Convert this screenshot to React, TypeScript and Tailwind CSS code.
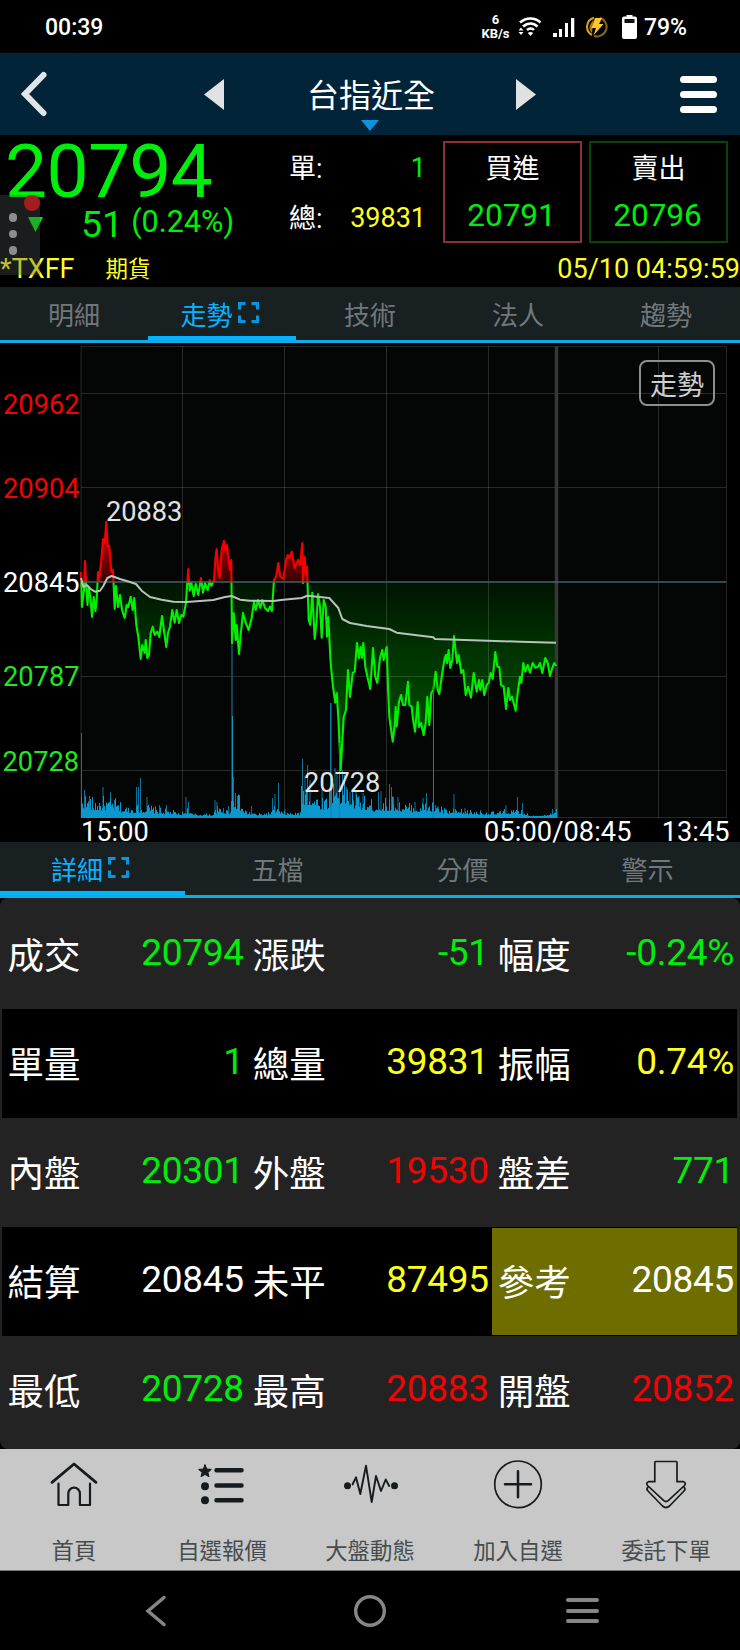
import {memo} from "react";
import type {ReactNode} from "react";
import clsx from "clsx";

const GREEN = "text-[#00ee0c]";
const RED = "text-[#ee0505]";
const YELLOW = "text-[#ffff1e]";

const chartTabs = ["明細", "走勢", "技術", "法人", "趨勢"];
const detailTabs = ["詳細", "五檔", "分價", "警示"];

const detailRows = [
  [
    {label: "成交", value: "20794", color: GREEN},
    {label: "漲跌", value: "-51", color: GREEN},
    {label: "幅度", value: "-0.24%", color: GREEN},
  ],
  [
    {label: "單量", value: "1", color: GREEN},
    {label: "總量", value: "39831", color: YELLOW},
    {label: "振幅", value: "0.74%", color: YELLOW},
  ],
  [
    {label: "內盤", value: "20301", color: GREEN},
    {label: "外盤", value: "19530", color: RED},
    {label: "盤差", value: "771", color: GREEN},
  ],
  [
    {label: "結算", value: "20845", color: "text-white"},
    {label: "未平", value: "87495", color: YELLOW},
    {label: "參考", value: "20845", color: "text-white", active: true},
  ],
  [
    {label: "最低", value: "20728", color: GREEN},
    {label: "最高", value: "20883", color: RED},
    {label: "開盤", value: "20852", color: RED},
  ],
];

const BASE_Y = 582;
const VOLUME_Y = 818;

const pricePoints =
  "81,572 82,607 84,590 85,561 86,583 87.5,605 88.7,588 90.5,598 92,617 93.7,597 95.5,611 96.7,600 98,572 99,580 101.3,560 103,539 104.7,543 106.3,521.7 107.7,546.7 109.3,546 111.3,571.7 113,570 114.7,609 116,586 118,607 120,595 122,610 124.7,618 126.7,605 128.3,607 130.7,596.7 132.7,610 134.3,598 136.3,625 138.3,636.7 140.7,659 142.3,645 144.7,653 145.7,640 147.3,658 149,655 150.7,633 152.7,626.7 154.7,635 157.3,631.7 159.3,637 162,616 164.3,633 166.3,647 168,633 170,626.7 172.3,610 174.7,622.7 176.7,610 179,623 181.3,615 183.3,616.7 186,603 187.3,581.7 188.3,569 189.7,590.7 191.3,582.7 193.7,596 195.7,584 198.3,595 201,578 203,592.7 205,583 207.7,590 209.7,580 211.3,586 214,580 215.3,560 216.7,549 218.3,571.7 219.7,578 221.7,550 224,540.7 225.3,550 227,545 228.7,560 230,570 231.3,560 232,643 233.7,613 235.7,640 236.7,625 239,654 240.7,635 243,613 245.7,623 248.7,630 251.7,618 254,601.7 255.7,610 258,600 260.3,608 262.3,600 265,608 268,611 270,606.7 272,611 274,580 276.3,576 278.3,563 280.3,576.7 283.3,579 286,560 287.7,555 289.3,558 291.7,551.7 294.7,568 298,560 300,565 302.3,543 303,583 304.7,556.7 306,575 307,566.7 308.7,620 310.3,625 312.3,592.7 314.7,639 316.7,620 318,594 320,606.7 321.7,637.7 323.7,600 325.7,606.7 327,636.7 328.3,617 330.3,656.7 331,666.7 333,686.7 335.3,702.7 336.7,693 338.3,716.7 340.7,770 343.7,717 346,710 348,670 350,697 352.7,673 354.7,671.7 357,643 359,658 360.7,647 362,658 363.3,643 365.3,666.7 367.7,678 370.3,689 373,648 375.3,676.7 377.3,683 380,658 382.3,650 383.7,660 386.7,647 388,687 389.3,716.7 392.7,741.7 394.7,725 395.7,707 396.7,726.7 399,701.7 401,695 403,705 405.3,705 408,681.7 409.3,705 411.7,706.7 412.7,717 415,731.7 417.7,702 419,727 421,723 423.7,735 425.7,723 427.3,697 429.3,725 431.3,693 433.3,690 435.7,671.7 437.7,690 439.3,694 442,675 444.7,658 446,655 447,663 448.7,650 450.3,668 452.3,660 454,636 455.7,651.7 457,663 458.7,655 461.3,673 463.3,670 465.7,695 468,686.7 471,697.7 473.7,673 476.7,691.7 479,680 480.3,690 482.3,680 484.3,695 486.7,685 488.7,683 490.7,673 492.7,679 495.3,652 497.3,666.7 499.3,667 501,685 503.7,686.7 506,709 508.3,688 510,700 512,696.7 515.7,710.7 517.7,693 520,676.7 521.3,683 523.3,663 525.3,671.7 527.7,665 530,672.7 532.7,663 535.3,667.7 538.3,666.7 540,663 542.3,673 545.3,658 547.7,663 550,676 552.3,668 554.3,663 556.3,666";

const averagePoints =
  "81,578 83.3,587 86.7,585 90.7,589 95,591.7 100,590.7 103.3,586 107.3,578 111.7,576 120,579 130,582 136,584 141.7,590.7 150,597 161.7,599.7 173.3,601.7 186.7,602 213.3,600 225,597 231.7,596 240,599.7 250,600.7 273.3,601 283.3,599.7 301.7,598 307.3,595.7 329.3,598 338.3,608 342.3,619 350,623 366.7,626 389.3,629 396.7,632.7 433.3,637.3 435,639 520,641.7 556,642.7";

// [x, top] of the bars that stand out
const volumeSpikes = [
  [81.5, 733], [84.5, 790], [89.5, 796], [103, 787], [110.5, 792], [114.5, 800], [136.5, 787], [138.5, 787],
  [140.5, 778], [147, 797], [159.5, 805], [166.5, 805], [186, 797], [188.5, 802], [215, 800], [217, 802],
  [223.5, 808], [228.5, 806], [233.5, 777], [235.5, 793], [237.5, 796], [239.5, 797], [251.5, 806], [272.5, 798],
  [275, 794], [278.5, 783], [285, 809], [302.5, 759], [305, 776], [307.5, 765], [310, 780], [322, 790],
  [330.5, 703], [335, 768], [337, 773], [339.5, 743], [342.5, 770], [346.5, 787], [350, 792], [356, 790],
  [359, 796], [363, 793], [378.5, 792], [381, 791], [389.5, 784], [391.5, 787], [393.5, 797], [398, 797],
  [415, 802], [423, 798], [426.5, 793], [433.5, 680], [435.5, 805], [438, 806], [454, 794], [465, 808],
  [506, 805], [517.5, 797], [522.5, 803], [552.5, 809],
];

// [x, typical height], interpolated in between
const volumeEnvelope = [
  [81, 28], [90, 19], [103, 20], [115, 18], [125, 11], [148, 13], [158, 9], [172, 7], [180, 3], [188, 10], [192, 3],
  [213, 3], [217, 10], [230, 7], [232, 32], [240, 20], [245, 7], [258, 3], [270, 5], [276, 12], [282, 5], [300, 4],
  [302, 38], [310, 36], [318, 22], [328, 24], [332, 44], [344, 40], [356, 24], [375, 16], [392, 20], [405, 14],
  [418, 14], [436, 15], [446, 8], [470, 7], [495, 5], [508, 8], [524, 6], [530, 1], [546, 2], [557, 10],
];

function envelopeAt(x: number) {
  for (let i = 1; i < volumeEnvelope.length; i++) {
    const [x1, h1] = volumeEnvelope[i];
    const [x0, h0] = volumeEnvelope[i - 1];
    if (x <= x1) return h0 + ((h1 - h0) * (x - x0)) / (x1 - x0);
  }
  return 0;
}

const volumePath = (() => {
  let seed = 17;
  let d = "";
  for (let x = 81.5; x < 557; x += 1) {
    seed = (seed * 1103515245 + 12345) % 2147483648;
    const noise = seed / 2147483648;
    const height = 1.5 + envelopeAt(x) * (0.3 + 0.75 * noise * noise);
    d += `M${x} ${VOLUME_Y}V${(VOLUME_Y - height).toFixed(1)}`;
  }
  return d;
})();

const spikePath = volumeSpikes.map(([x, y]) => `M${x} ${VOLUME_Y}V${y}`).join("");

function StatusBar() {
  return (
    <div className="flex h-[53px] items-center bg-black pt-px pl-[45px] font-medium leading-none">
      <span className="text-[23px]">00:39</span>
      <div className="ml-auto flex w-[27px] flex-col items-center text-[13px] font-bold leading-[14px]">
        <span>6</span>
        <span>KB/s</span>
      </div>
      <svg className="ml-[9px] h-[22px] w-[24px]" viewBox="0 0 24 22" fill="none" stroke="white">
        <path d="M2 6.5C8 1 17 1 22.5 6.5M5 10.5c4.500-4 10.500-4 14.500 0M9 14c2.200-2 5.200-2 7 0" strokeWidth="2.500" />
        <path d="M12.500 20l-2.700-3c1.500-1.400 3.900-1.400 5.400 0zM.5 14.500L3 11.500l2.500 3zM.5 16L3 19l2.500-3z" fill="white" stroke="none" />
      </svg>
      <svg className="ml-[11px] h-[20px] w-[22px]" viewBox="0 0 22 20" fill="white">
        <path d="M0 16h4v4H0zM6 12h3v8H6zM12 6h3v14h-3zM18 1h3.300v19H18z" />
      </svg>
      <svg className="ml-[11px] h-[22px] w-[22px]" viewBox="0 0 22 22" fill="none">
        <path d="M8 1.800A9.300 9.300 0 0 0 6 19" stroke="#d9a21b" strokeWidth="2" />
        <path d="M14 1.800A9.300 9.300 0 0 1 8 20" stroke="#8a6514" strokeWidth="2" />
        <path d="M7.500 3L3.800 9.500A7.500 7.500 0 0 0 6 17z" fill="#a87a14" />
        <path d="M9 2h7l-3 6h4.500L7.500 19.500 10 12H5.500z" fill="#ffc72b" />
      </svg>
      <svg className="ml-[13px] h-[26px] w-[17px]" viewBox="0 0 17 26">
        <path d="M5.500 1h6v3h-6z" fill="white" />
        <rect x="1" y="2.500" width="15" height="22.500" rx="2" fill="white" />
        <rect x="3.500" y="5" width="10" height="4" fill="#111" />
      </svg>
      <span className="mr-[53px] ml-[6px] text-[23px]">79%</span>
    </div>
  );
}

function Header() {
  return (
    <header className="relative flex h-[82px] items-center bg-[#022439] pr-[23px] pl-[20px]">
      <svg className="h-[46px] w-[28px]" viewBox="0 0 28 46" fill="none">
        <path d="M23.500 4L5 23l18.500 19" stroke="#e1e5ea" strokeWidth="6" strokeLinecap="round" />
      </svg>
      <svg className="ml-[156px] h-[31px] w-[20px]" viewBox="0 0 20 31">
        <path d="M0 15.500L20 0v31z" fill="#dfe1e2" />
      </svg>
      <h1 className="mt-[4px] ml-[83px] w-[128px] text-center text-[32px] leading-none whitespace-nowrap">台指近全</h1>
      <svg className="ml-[81px] h-[31px] w-[20px]" viewBox="0 0 20 31">
        <path d="M20 15.500L0 0v31z" fill="#dfe1e2" />
      </svg>
      <div className="ml-auto flex w-[37px] flex-col gap-2">
        <span className="h-[7px] rounded-full bg-white" />
        <span className="h-[7px] rounded-full bg-white" />
        <span className="h-[7px] rounded-full bg-white" />
      </div>
      <svg className="absolute bottom-[4px] left-[361px] h-[11px] w-[18px]" viewBox="0 0 18 11">
        <path d="M0 0h18L9 11z" fill="#0d92dc" />
      </svg>
    </header>
  );
}

function OrderBox({label, price, className}: {label: string; price: string; className: string}) {
  return (
    <div className={clsx("mt-[6px] flex h-[102px] w-[139px] flex-col items-center border-2 leading-none", className)}>
      <span className="mt-[13px] text-[27px]">{label}</span>
      <span className={clsx("mt-[17px] mr-[2px] text-[31.500px]", GREEN)}>{price}</span>
    </div>
  );
}

function FloatingHandle() {
  return (
    <div className="absolute top-[60px] left-0 flex h-[80px] w-[40px] flex-col gap-[8px] bg-[#4a5054]/35 pt-[18px] pl-[8.500px]">
      <span className="size-[8.500px] rounded-full bg-[#8b8d8f]" />
      <span className="size-[8.500px] rounded-full bg-[#8b8d8f]" />
      <span className="size-[8.500px] rounded-full bg-[#8b8d8f]" />
    </div>
  );
}

function Quote() {
  return (
    <section className="relative h-[152px] bg-black leading-none">
      <div className="flex h-[110px]">
        <div className="w-[289px]">
          <p className={clsx("h-[72px] pl-[5px] text-[75px] leading-[72px] tracking-[-0.7px]", GREEN)}>20794</p>
          <div className={clsx("flex h-[35px] items-center pl-[28px]", GREEN)}>
            <svg className="h-[15px] w-[15px]" viewBox="0 0 15 15">
              <path d="M0 0h15L7.500 15z" fill="#00e60b" />
            </svg>
            <span className="ml-[38px] text-[37.500px]">51</span>
            <span className="mb-[5px] ml-[8px] text-[30.500px]">(0.24%)</span>
          </div>
        </div>
        <div className="w-[137px] pt-[8px] text-[27px]">
          <div className="flex h-[50px] items-center justify-between">
            <span className="mt-[2px]">單:</span>
            <span className={GREEN}>1</span>
          </div>
          <div className="flex h-[50px] items-center justify-between">
            <span className="mt-[2px]">總:</span>
            <span className={YELLOW}>39831</span>
          </div>
        </div>
        <div className="ml-[17px] flex gap-[7px]">
          <OrderBox label="買進" price="20791" className="border-[#8c3033]" />
          <OrderBox label="賣出" price="20796" className="border-[#07430a]" />
        </div>
      </div>
      <div className={clsx("flex h-[42px] items-center pt-[7px] text-[27px]", YELLOW)}>
        <span>*TXFF</span>
        <span className="ml-[31px] text-[22.500px]">期貨</span>
        <span className="ml-auto">05/10 04:59:59</span>
      </div>
      <span className="absolute top-[60px] left-[24px] size-[16px] rounded-full bg-[#d40000]" />
      <FloatingHandle />
    </section>
  );
}

function ExpandIcon() {
  return (
    <svg className="mt-[2px] ml-[5px] h-[21px] w-[21px]" viewBox="0 0 21 21" fill="none">
      <path
        d="M1.500 7.500v-6h6M13.500 1.500h6v6M19.500 13.500v6h-6M7.500 19.500h-6v-6"
        stroke="#0996dc"
        strokeWidth="3"
      />
    </svg>
  );
}

function Tabs({items, active}: {items: string[]; active: number}) {
  return (
    <nav className="flex h-[56px] border-b-[3px] border-[#10aae8] bg-[#182022]">
      {items.map((item, i) => (
        <div
          key={item}
          className={clsx(
            "flex flex-1 items-center justify-center border-b-[4px] text-[26px] leading-none",
            i === active ? "border-[#00b4ff] text-[#08b2ff]" : "border-transparent text-[#70787a]"
          )}
        >
          <span className={clsx("mt-[9px]", i === active && "ml-[-5px]")}>{item}</span>
          {i === active && <ExpandIcon />}
        </div>
      ))}
    </nav>
  );
}

function TrendChart() {
  const area = `81,${BASE_Y} ${pricePoints} 556.3,${BASE_Y}`;

  return (
    <section className="relative h-[499px] bg-black">
      <svg className="block h-[499px] w-[740px] overflow-visible" viewBox="0 343 740 499" fontSize="27.2">
        <defs>
          <clipPath id="above">
            <rect x="80" y="346" width="480" height={BASE_Y - 346} />
          </clipPath>
          <clipPath id="below">
            <rect x="80" y={BASE_Y} width="480" height="240" />
          </clipPath>
          <linearGradient id="upFill" gradientUnits="userSpaceOnUse" x1="0" y1="520" x2="0" y2="582">
            <stop offset="0" stopColor="#ff0000" />
            <stop offset="1" stopColor="#300000" />
          </linearGradient>
          <linearGradient id="downFill" gradientUnits="userSpaceOnUse" x1="0" y1="582" x2="0" y2="770">
            <stop offset="0" stopColor="#001400" />
            <stop offset="0.36" stopColor="#003300" />
            <stop offset="1" stopColor="#005600" />
          </linearGradient>
        </defs>

        <rect x="81" y="346" width="645" height="472" fill="#040606" />
        <polygon points={area} fill="url(#upFill)" clipPath="url(#above)" />
        <polygon points={area} fill="url(#downFill)" clipPath="url(#below)" />

        <g stroke="#ffffff" strokeOpacity="0.14" fill="none">
          <path d="M81 346.500H726M81 393.500H726M81 487.500H726M81 676.500H726M81 770.500H726M81 817.500H726" />
          <path d="M81 346V818M182.500 346V818M284.500 346V818M386.500 346V818M488.500 346V818M658.500 346V818M726.500 346V818" />
        </g>
        <path d="M556.500 346V818" stroke="#363838" strokeWidth="3.5" />

        <path d={`M232 ${VOLUME_Y}V640`} stroke="#155a74" strokeWidth="1.5" />
        <path d={`M232.500 ${VOLUME_Y}V716`} stroke="#1594c4" strokeWidth="1" />
        <path d={spikePath} stroke="#0b749c" strokeWidth="1" />

        <g fill="none" strokeWidth="2.1" strokeLinejoin="round">
          <polyline points={pricePoints} stroke="#f50000" clipPath="url(#above)" />
          <polyline points={pricePoints} stroke="#00f000" clipPath="url(#below)" />
        </g>
        <path d={volumePath} stroke="#0a98cf" strokeWidth="1" />
        <path d={`M331 ${VOLUME_Y}V703M339.500 ${VOLUME_Y}V743M433.500 ${VOLUME_Y}V680`} stroke="#0f7fae" />
        <path d={`M81 ${BASE_Y}H726`} stroke="#426168" strokeWidth="1.3" />
        <polyline points={averagePoints} fill="none" stroke="#b9c2bd" strokeWidth="2" strokeLinejoin="round" />

        <g textAnchor="end">
          <text x="79.500" y="413.500" fill="#f00505">20962</text>
          <text x="79.500" y="497.500" fill="#f00505">20904</text>
          <text x="79.500" y="592" fill="#fff">20845</text>
          <text x="79.500" y="686" fill="#1fe81f">20787</text>
          <text x="79" y="771" fill="#1fe81f">20728</text>
        </g>
        <text x="106" y="520.500" fill="#e3e3e3">20883</text>
        <text x="304" y="791.500" fill="#e3e3e3">20728</text>
        <g fill="#fff">
          <text x="81" y="840.500">15:00</text>
          <text x="484" y="840.500" textLength="147.500">05:00/08:45</text>
          <text x="729.500" y="840.500" textAnchor="end">13:45</text>
        </g>
      </svg>
      <button className="absolute top-[17px] right-[25px] h-[46px] w-[76px] rounded-lg border-2 border-[#8e8e8e] pt-[6px] text-[27px] leading-none text-[#cfcfcf]">
        走勢
      </button>
    </section>
  );
}

function DetailTable() {
  return (
    <section className="h-[551px] overflow-hidden rounded-lg bg-[#232323] pt-[2px] pr-[3px] pl-[1.500px] leading-none">
      {detailRows.map((row, i) => (
        <div key={row[0].label} className={clsx("grid h-[109px] grid-cols-3", i % 2 === 1 && "bg-black")}>
          {row.map((cell) => (
            <div
              key={cell.label}
              className={clsx(
                "my-px flex items-center justify-between pr-[3px] pl-[6px]",
                "active" in cell && "bg-[#6e6e00]"
              )}
            >
              <span className="mt-[5px] text-[36.500px]">{cell.label}</span>
              <span className={clsx("mb-[4px] text-[37px] tracking-[-0.3px]", cell.color)}>{cell.value}</span>
            </div>
          ))}
        </div>
      ))}
    </section>
  );
}

function FooterItem({label, children}: {label: string; children: ReactNode}) {
  return (
    <div className="flex flex-1 flex-col items-center pt-[7px]">
      <svg
        className="h-[56px] w-[56px]"
        viewBox="0 0 56 56"
        fill="none"
        stroke="#171b1d"
        strokeWidth="2"
        strokeLinecap="round"
        strokeLinejoin="round"
      >
        {children}
      </svg>
      <span className="mt-[28px] text-[22.400px] leading-none text-[#474d4f]">{label}</span>
    </div>
  );
}

function Footer() {
  return (
    <footer className="flex h-[122px] border-b border-[#777] bg-[#c8c8c8]">
      <FooterItem label="首頁">
        <path d="M6 26.300L28 8l22 18.300" strokeWidth="2.800" />
        <path d="M12.500 27.500V49h9.800V37.500a5.800 5.800 0 0 1 11.600 0V49H44V27.500" strokeWidth="2.200" />
      </FooterItem>
      <FooterItem label="自選報價">
        <path
          d="M11 8.800l1.800 4.200 4.600.4-3.500 3 1.100 4.400-4-2.400-4 2.400 1.100-4.400-3.500-3 4.600-.4z"
          fill="#171b1d"
          strokeWidth="1"
        />
        <circle cx="11" cy="30.300" r="4" fill="#171b1d" stroke="none" />
        <circle cx="11" cy="44.300" r="4" fill="#171b1d" stroke="none" />
        <path d="M22.500 14.300h25M22.500 29.500h25M22.500 44.300h25" strokeWidth="4.500" />
      </FooterItem>
      <FooterItem label="大盤動態">
        <circle cx="5.500" cy="29.700" r="3.500" fill="#171b1d" stroke="none" />
        <circle cx="52.500" cy="29.700" r="3.500" fill="#171b1d" stroke="none" />
        <path d="M10.500 28.500L14 21.300 18.300 38 24 9.700 29.700 46 34 20l5 15 4.700-11.500 3.500 6.500" strokeWidth="1.900" />
      </FooterItem>
      <FooterItem label="加入自選">
        <circle cx="28" cy="28.300" r="23.300" strokeWidth="1.700" />
        <path d="M28 15.300v26M15 28.300h26" strokeWidth="2.500" />
      </FooterItem>
      <FooterItem label="委託下單">
        <g strokeWidth="1.700">
          <path d="M17.500 5.500h20.800q.7 0 .7.700V25.700h6.500q3 1.300 1 3.800L30.500 44.300q-2.500 2.400-5 0L9.500 29.500q-2-2.500 1-3.800h6.300V6.200q0-.7.700-.7z" />
          <path d="M10 31q-2 2 0 4L24.500 50q3.500 3 7 0L46 35q2-2 0-4" />
        </g>
      </FooterItem>
    </footer>
  );
}

function SystemNav() {
  return (
    <div className="flex h-[79px] items-center justify-center bg-black">
      <div className="grid w-[642px] grid-cols-3 place-items-center">
        <svg className="h-[34px] w-[24px]" viewBox="0 0 24 34" fill="none">
          <path d="M20 3.500L4 17l16 13.500" stroke="#868686" strokeWidth="3.500" strokeLinecap="round" />
        </svg>
        <svg className="h-[34px] w-[34px]" viewBox="0 0 34 34" fill="none">
          <circle cx="17" cy="17" r="14.300" stroke="#868686" strokeWidth="3.500" />
        </svg>
        <div className="mr-[4px] flex w-[33px] flex-col gap-[6.500px]">
          <span className="h-[4px] rounded-full bg-[#868686]" />
          <span className="h-[4px] rounded-full bg-[#868686]" />
          <span className="h-[4px] rounded-full bg-[#868686]" />
        </div>
      </div>
    </div>
  );
}

function App() {
  return (
    <main className="h-[1650px] w-[740px] overflow-hidden bg-black font-[Roboto,'Noto_Sans_CJK_TC',sans-serif] text-white">
      <StatusBar />
      <Header />
      <Quote />
      <Tabs items={chartTabs} active={1} />
      <TrendChart />
      <Tabs items={detailTabs} active={0} />
      <DetailTable />
      <Footer />
      <SystemNav />
    </main>
  );
}

export default memo(App);
